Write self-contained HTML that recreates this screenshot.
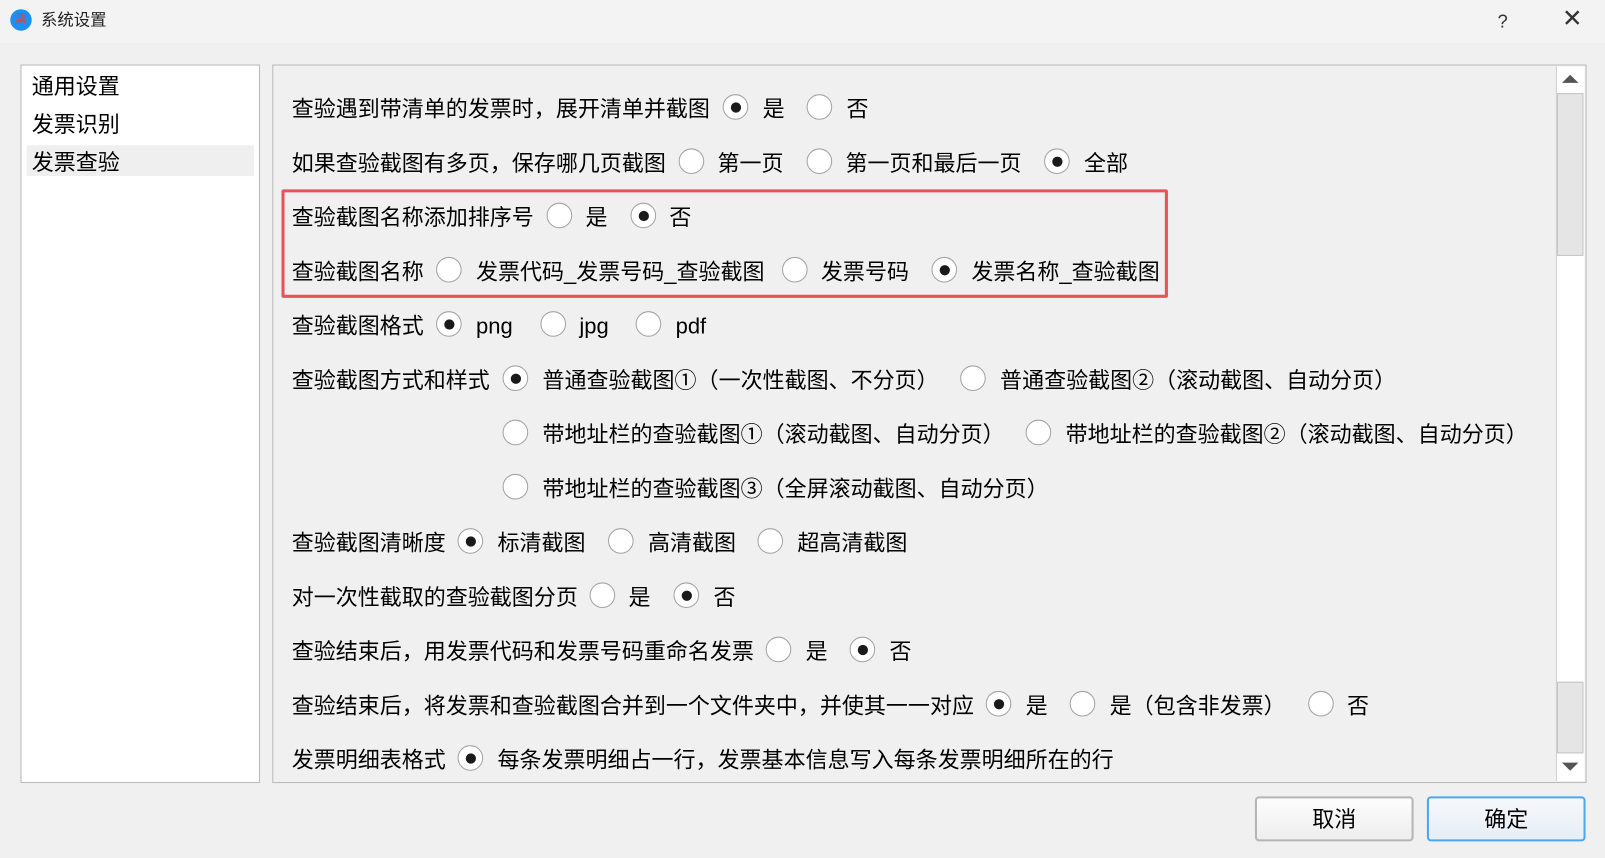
<!DOCTYPE html>
<html><head><meta charset="utf-8"><style>
html,body{margin:0;padding:0;width:1605px;height:858px;overflow:hidden;background:#f0f0f0}
#w{position:absolute;left:0;top:0;width:1568px;height:838px;transform:scale(1.02360);transform-origin:0 0;background:#f0f0f0;font-family:"Liberation Sans","Noto Sans CJK SC",sans-serif;color:#000}
.a{position:absolute}
.t{position:absolute;font-size:21.5px;line-height:28px;white-space:nowrap;margin-top:1px}
.r{position:absolute;width:23px;height:23px;border:1.6px solid #a3a3a3;border-radius:50%;background:#fff;box-sizing:content-box}
.r.s::after{content:"";position:absolute;left:6.5px;top:6.5px;width:10px;height:10px;border-radius:50%;background:#1a1a1a}
.btn{position:absolute;top:778px;width:155px;height:44px;border:2px solid #b5b5b5;border-radius:4px;background:linear-gradient(#fdfdfd,#eeeeee);font-size:21.5px;line-height:42px;text-align:center;box-sizing:border-box}
</style></head><body><div id="w">
<div class="a" style="left:0;top:0;width:1568px;height:42px;background:#f3f3f3"></div>
<div class="a" style="left:10px;top:9px;width:21px;height:21px;border-radius:50%;background:#1e8ff0;color:#e04040;font-size:11px;line-height:21px;text-align:center">票</div>
<div class="t" style="left:40px;top:6px;font-size:16px;color:#222">系统设置</div>
<div class="t" style="left:1463px;top:6px;font-size:18px;color:#333">?</div>
<div class="t" style="left:1526px;top:4px;font-size:24px;color:#333">✕</div>

<div class="a" style="left:20px;top:63px;width:232px;height:700px;background:#fff;border:1px solid #b9b9b9"></div>
<div class="a" style="left:26px;top:142px;width:222px;height:30px;background:#efefef"></div>
<div class="t" style="left:31px;top:70px">通用设置</div>
<div class="t" style="left:31px;top:107px">发票识别</div>
<div class="t" style="left:31px;top:144px">发票查验</div>

<div class="a" style="left:266px;top:63px;width:1282px;height:700px;border:1px solid #b9b9b9;background:#f0f0f0"></div>
<div class="a" style="left:1520px;top:65px;width:27px;height:698px;background:#fff;border-left:1px solid #ccc"></div>
<div class="a" style="left:1521px;top:91px;width:26px;height:159px;background:#e5e5e5;border:1px solid #c4c4c4;box-sizing:border-box"></div>
<div class="a" style="left:1521px;top:666px;width:26px;height:70px;background:#e5e5e5;border:1px solid #c4c4c4;box-sizing:border-box"></div>
<div class="a" style="left:1526px;top:73px;width:0;height:0;border-left:8px solid transparent;border-right:8px solid transparent;border-bottom:8px solid #555"></div>
<div class="a" style="left:1526px;top:745px;width:0;height:0;border-left:8px solid transparent;border-right:8px solid transparent;border-top:8px solid #555"></div>

<div class="a" style="left:275px;top:185px;width:860px;height:100px;border:3px solid #e8535b;border-radius:2px"></div>

<div class="t" style="left:285px;top:92px">查验遇到带清单的发票时，展开清单并截图</div>
<div class="r s" style="left:706px;top:92px"></div><div class="t" style="left:745px;top:92px">是</div>
<div class="r" style="left:788px;top:92px"></div><div class="t" style="left:827px;top:92px">否</div>

<div class="t" style="left:285px;top:145px">如果查验截图有多页，保存哪几页截图</div>
<div class="r" style="left:663px;top:145px"></div><div class="t" style="left:701px;top:145px">第一页</div>
<div class="r" style="left:788px;top:145px"></div><div class="t" style="left:826px;top:145px">第一页和最后一页</div>
<div class="r s" style="left:1020px;top:145px"></div><div class="t" style="left:1059px;top:145px">全部</div>

<div class="t" style="left:285px;top:198px">查验截图名称添加排序号</div>
<div class="r" style="left:534px;top:198px"></div><div class="t" style="left:572px;top:198px">是</div>
<div class="r s" style="left:616px;top:198px"></div><div class="t" style="left:654px;top:198px">否</div>

<div class="t" style="left:285px;top:251px">查验截图名称</div>
<div class="r" style="left:426px;top:251px"></div><div class="t" style="left:465px;top:251px">发票代码_发票号码_查验截图</div>
<div class="r" style="left:764px;top:251px"></div><div class="t" style="left:802px;top:251px">发票号码</div>
<div class="r s" style="left:910px;top:251px"></div><div class="t" style="left:949px;top:251px">发票名称_查验截图</div>

<div class="t" style="left:285px;top:304px">查验截图格式</div>
<div class="r s" style="left:426px;top:304px"></div><div class="t" style="left:465px;top:304px">png</div>
<div class="r" style="left:528px;top:304px"></div><div class="t" style="left:566px;top:304px">jpg</div>
<div class="r" style="left:621px;top:304px"></div><div class="t" style="left:660px;top:304px">pdf</div>

<div class="t" style="left:285px;top:357px">查验截图方式和样式</div>
<div class="r s" style="left:491px;top:357px"></div><div class="t" style="left:530px;top:357px">普通查验截图①（一次性截图、不分页）</div>
<div class="r" style="left:938px;top:357px"></div><div class="t" style="left:977px;top:357px">普通查验截图②（滚动截图、自动分页）</div>

<div class="r" style="left:491px;top:410px"></div><div class="t" style="left:530px;top:410px">带地址栏的查验截图①（滚动截图、自动分页）</div>
<div class="r" style="left:1002px;top:410px"></div><div class="t" style="left:1041px;top:410px">带地址栏的查验截图②（滚动截图、自动分页）</div>

<div class="r" style="left:491px;top:463px"></div><div class="t" style="left:530px;top:463px">带地址栏的查验截图③（全屏滚动截图、自动分页）</div>

<div class="t" style="left:285px;top:516px">查验截图清晰度</div>
<div class="r s" style="left:447px;top:516px"></div><div class="t" style="left:486px;top:516px">标清截图</div>
<div class="r" style="left:594px;top:516px"></div><div class="t" style="left:633px;top:516px">高清截图</div>
<div class="r" style="left:740px;top:516px"></div><div class="t" style="left:779px;top:516px">超高清截图</div>

<div class="t" style="left:285px;top:569px">对一次性截取的查验截图分页</div>
<div class="r" style="left:576px;top:569px"></div><div class="t" style="left:614px;top:569px">是</div>
<div class="r s" style="left:658px;top:569px"></div><div class="t" style="left:697px;top:569px">否</div>

<div class="t" style="left:285px;top:622px">查验结束后，用发票代码和发票号码重命名发票</div>
<div class="r" style="left:748px;top:622px"></div><div class="t" style="left:787px;top:622px">是</div>
<div class="r s" style="left:830px;top:622px"></div><div class="t" style="left:869px;top:622px">否</div>

<div class="t" style="left:285px;top:675px">查验结束后，将发票和查验截图合并到一个文件夹中，并使其一一对应</div>
<div class="r s" style="left:963px;top:675px"></div><div class="t" style="left:1002px;top:675px">是</div>
<div class="r" style="left:1045px;top:675px"></div><div class="t" style="left:1084px;top:675px">是（包含非发票）</div>
<div class="r" style="left:1278px;top:675px"></div><div class="t" style="left:1316px;top:675px">否</div>

<div class="t" style="left:285px;top:728px">发票明细表格式</div>
<div class="r s" style="left:447px;top:728px"></div><div class="t" style="left:486px;top:728px">每条发票明细占一行，发票基本信息写入每条发票明细所在的行</div>

<div class="btn" style="left:1226px">取消</div>
<div class="btn" style="left:1394px;border-color:#4aa8f2;background:linear-gradient(#f6f9fc,#e6edf5)">确定</div>
</div></body></html>
